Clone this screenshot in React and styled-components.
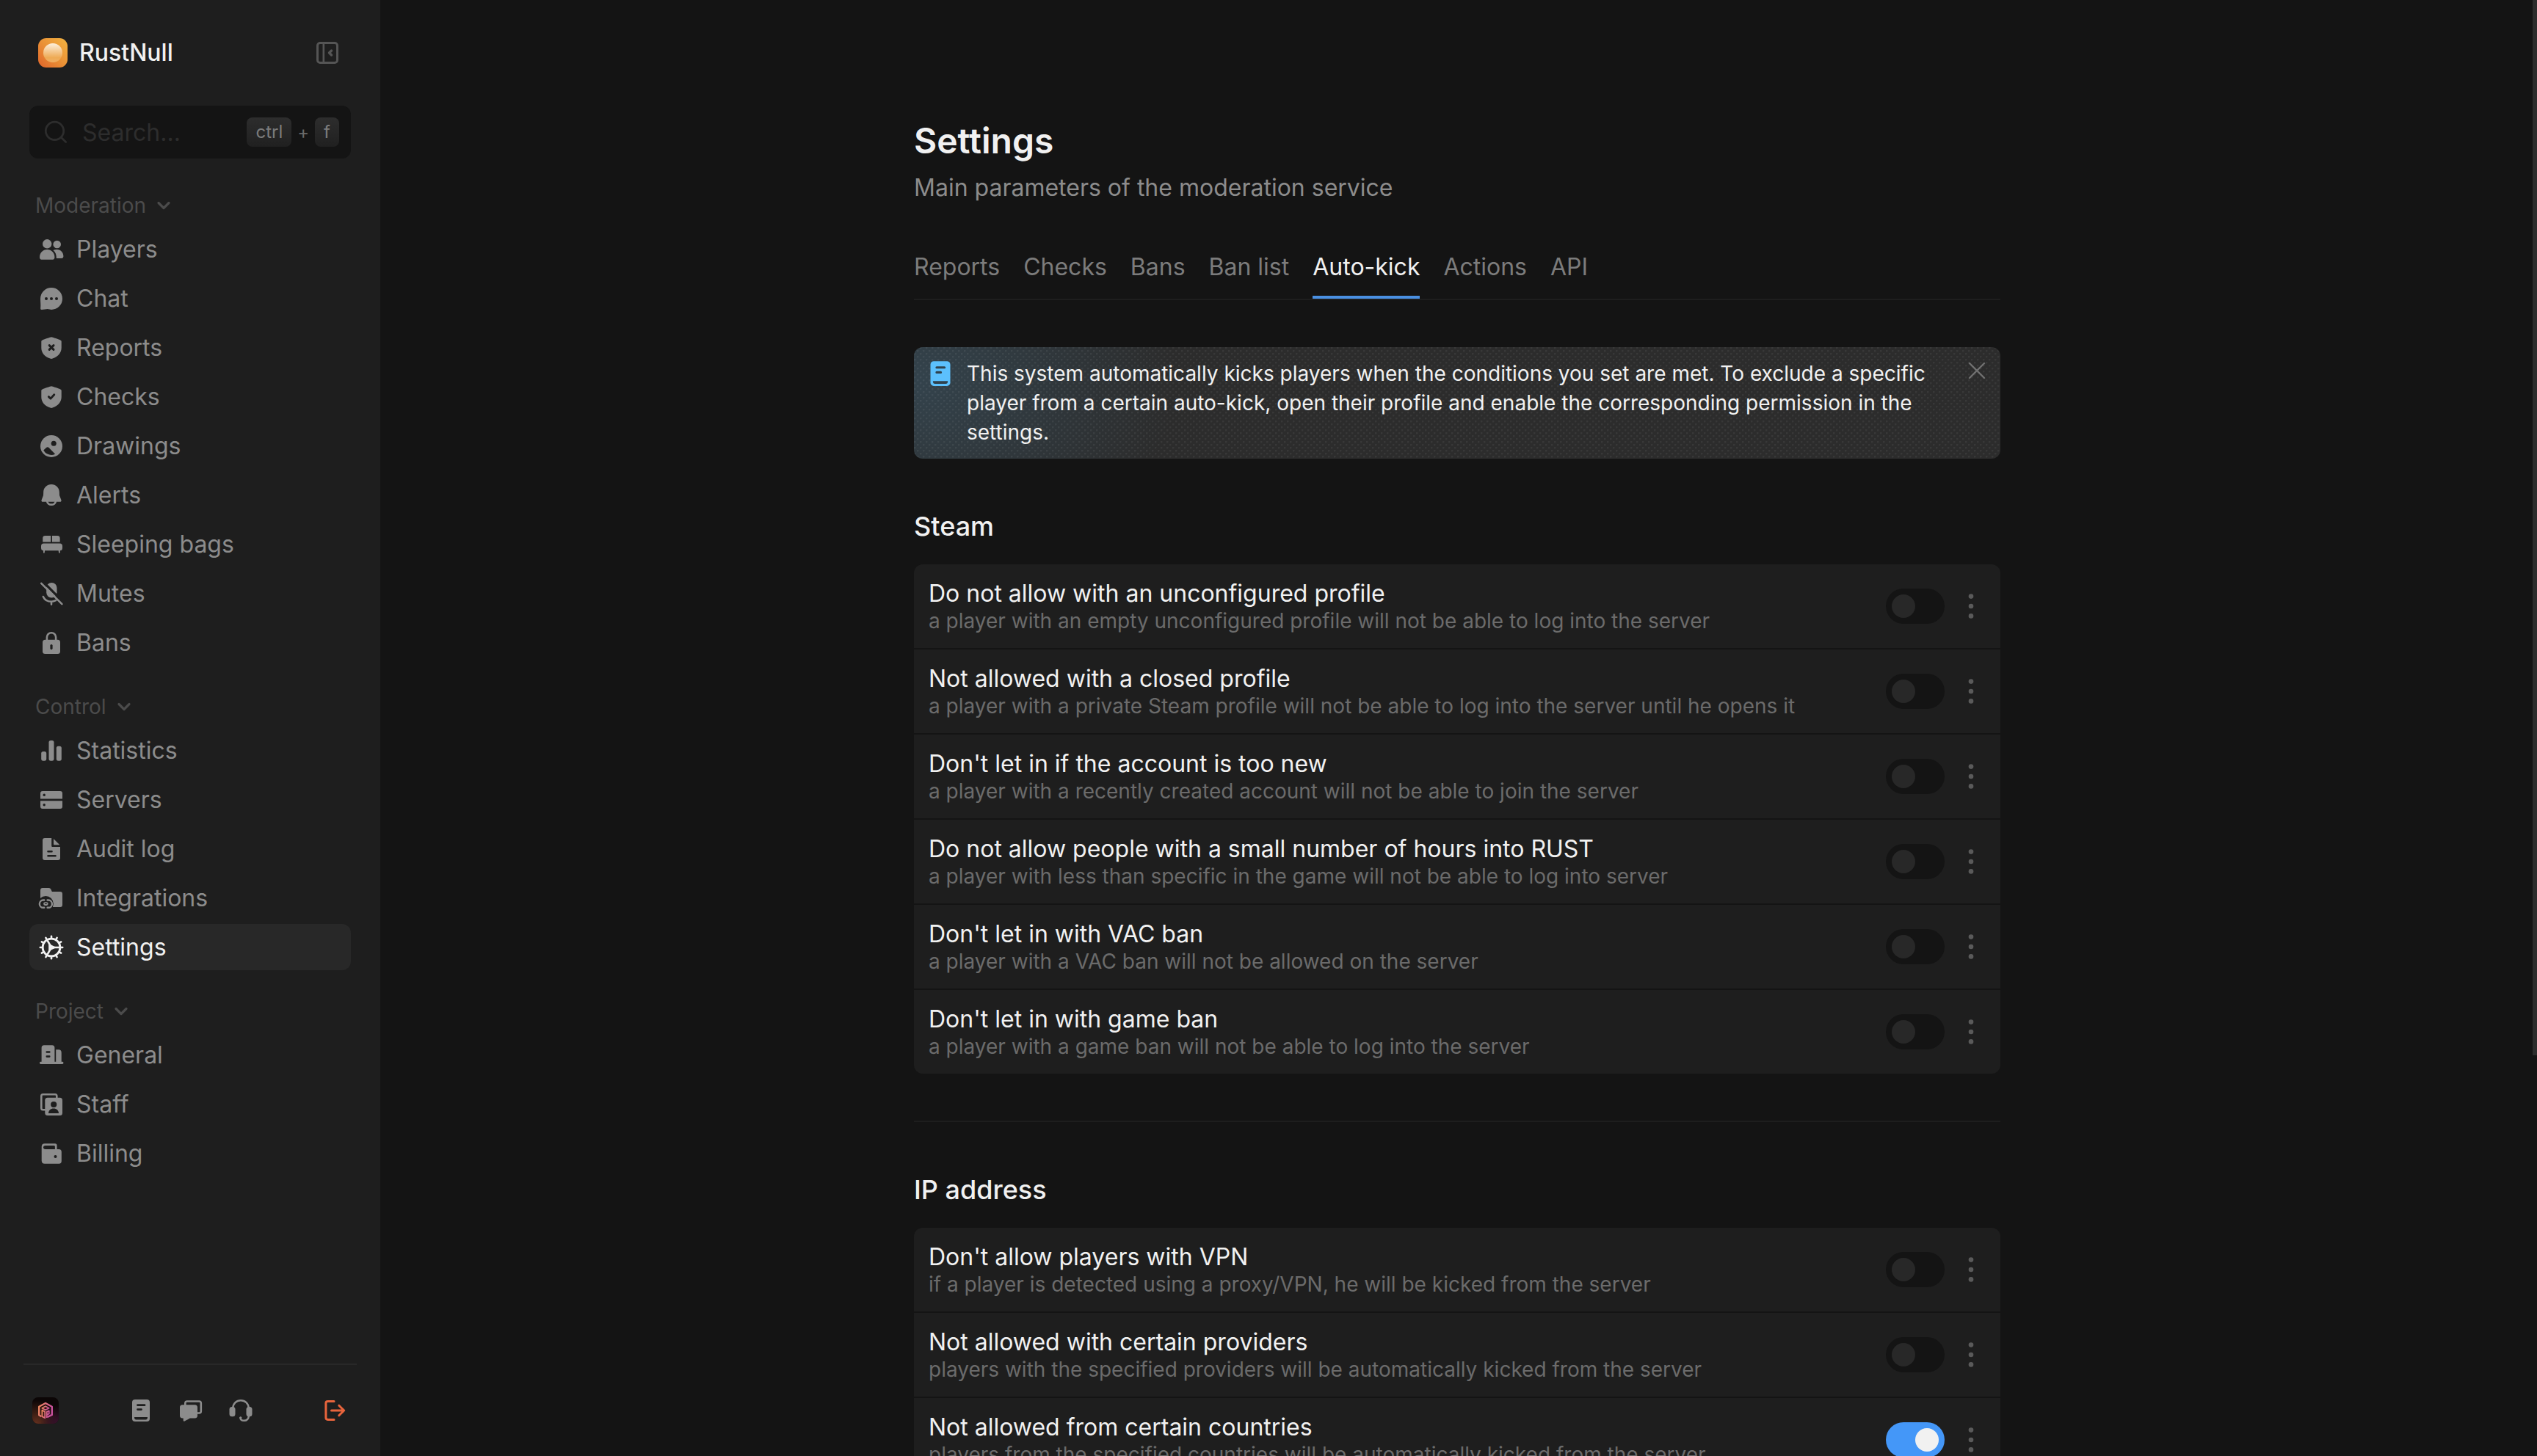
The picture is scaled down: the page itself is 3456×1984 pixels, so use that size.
import React, { useState } from 'react';
import styled, { createGlobalStyle } from 'styled-components';

const colors = {
  page: '#141414',
  panel: '#1e1e1e',
  line: '#282828',
  white: '#f1f1f1',
  text: '#8c8c8c',
  muted: '#6b6b6b',
  faint: '#4b4b4b',
  blue: '#4497f8',
  danger: '#e8643c'
};

const GlobalStyle = createGlobalStyle`
  * {
    box-sizing: border-box;
  }

  body {
    margin: 0;
    background: ${colors.page};
    color: ${colors.white};
    font-family: Inter, 'Liberation Sans', sans-serif;
    font-size: 32px;
  }

  button, input {
    font: inherit;
    color: inherit;
    background: none;
    border: 0;
    padding: 0;
    margin: 0;
  }

  button {
    cursor: pointer;
  }

  svg {
    display: block;
    flex-shrink: 0;
  }
`;

const Shell = styled.div`
  display: flex;
  height: 100vh;
  overflow: hidden;
`;

const Sidebar = styled.aside`
  display: flex;
  flex-direction: column;
  flex: 0 0 518px;
  min-width: 0;
  background: ${colors.panel};
`;

const Brand = styled.header`
  display: flex;
  align-items: center;
  gap: 16px;
  padding: 52px 56px 52px 52px;
`;

const BrandName = styled.span`
  flex: 1;
  line-height: 40px;
  font-weight: 500;
`;

const IconButton = styled.button`
  display: flex;
  align-items: center;
  justify-content: center;
  color: ${props => props.$color || colors.text};
`;

const SearchBox = styled.label`
  display: flex;
  align-items: center;
  height: 72px;
  margin: 0 40px;
  padding: 0 16px 0 20px;
  border-radius: 12px;
  background: ${colors.page};
  color: #2d2d2d;
`;

const SearchInput = styled.input`
  flex: 1;
  width: 100%;
  min-width: 0;
  margin: 0 20px;
  outline: none;

  &::placeholder {
    color: #2d2d2d;
    opacity: 1;
  }
`;

const Shortcut = styled.span`
  display: flex;
  align-items: center;
  gap: 8px;
  font-size: 24px;
  color: ${colors.muted};
`;

const Key = styled.kbd`
  padding: 0 12px;
  border-radius: 8px;
  background: linear-gradient(#2d2d2d, #202020);
  color: #7c7c7c;
  font-family: inherit;
  line-height: 40px;
`;

const Nav = styled.nav`
  display: flex;
  flex-direction: column;
  flex: 1;
  gap: 28px;
  padding: 36px 40px 0;
`;

const GroupTitle = styled.button`
  display: flex;
  align-items: center;
  gap: 14px;
  height: 56px;
  padding-left: 8px;
  font-size: 28px;
  color: ${colors.faint};
`;

const GroupItems = styled.div`
  display: flex;
  flex-direction: column;
  gap: 4px;
`;

const NavItem = styled.a`
  display: flex;
  align-items: center;
  gap: 18px;
  height: 63px;
  padding: 0 14px;
  border-radius: 12px;
  background: ${props => (props.$active ? '#282828' : 'transparent')};
  color: ${props => (props.$active ? colors.white : colors.text)};
  text-decoration: none;
`;

const Footer = styled.footer`
  display: flex;
  align-items: center;
  justify-content: space-between;
  height: 126px;
  margin: 0 32px;
  padding: 0 14px 0 12px;
  border-top: 2px solid ${colors.line};
`;

const FooterLinks = styled.div`
  display: flex;
  gap: 36px;
`;

const Main = styled.main`
  position: relative;
  flex: 1;
  min-width: 0;
  overflow: hidden;
`;

const Scroll = styled.div`
  height: 100%;
  padding: 160px 4px 64px 0;
  overflow-y: auto;
  scrollbar-width: none;
`;

const ScrollThumb = styled.div`
  position: absolute;
  top: 0;
  right: 0;
  width: 6px;
  height: 72.5%;
  background: #2d2d2d;
`;

const Content = styled.div`
  max-width: 1480px;
  margin: 0 auto;
`;

const Title = styled.h1`
  margin: 0;
  font-size: 48px;
  font-weight: 600;
  line-height: 64px;
`;

const Subtitle = styled.p`
  margin: 12px 0 68px;
  line-height: 40px;
  color: ${colors.text};
`;

const Tabs = styled.div`
  display: flex;
  gap: 32px;
  margin-bottom: 64px;
  border-bottom: 2px solid ${colors.panel};
`;

const Tab = styled.button`
  padding-bottom: 19px;
  border-bottom: 4px solid ${props => (props.$active ? '#4a90e2' : 'transparent')};
  color: ${props => (props.$active ? colors.white : '#7c7c7c')};
  line-height: 40px;
`;

const Notice = styled.div`
  display: flex;
  align-items: flex-start;
  gap: 18px;
  padding: 16px 20px 16px 18px;
  border-radius: 12px;
  background:
    radial-gradient(circle at 1px 1px, rgba(255, 255, 255, .06) 1px, transparent 2px) 0 0 / 8px 8px,
    radial-gradient(circle at 1px 1px, rgba(255, 255, 255, .06) 1px, transparent 2px) 4px 4px / 8px 8px,
    radial-gradient(ellipse 360px 260px at 0 30%, rgba(75, 140, 180, .24), transparent),
    #2c2c2c;
`;

const NoticeIcon = styled.span`
  padding-top: 2px;
  color: #5cc0fd;
`;

const NoticeClose = styled(IconButton)`
  padding-top: 4px;
`;

const NoticeText = styled.p`
  flex: 1;
  margin: 0;
  padding-right: 12px;
  font-size: 28px;
  line-height: 40px;
`;

const SectionTitle = styled.h2`
  margin: 64px 0 24px;
  font-size: 36px;
  font-weight: 500;
  line-height: 56px;
`;

const Divider = styled.hr`
  height: 2px;
  margin: 64px 0 0;
  border: 0;
  background: ${colors.panel};
`;

const Card = styled.div`
  display: flex;
  flex-direction: column;
  gap: 2px;
  border-radius: 12px;
  overflow: hidden;
`;

const Row = styled.div`
  display: flex;
  align-items: center;
  gap: 16px;
  padding: 20px;
  background: ${colors.panel};
`;

const RowLabel = styled.label`
  display: flex;
  flex-direction: column;
  flex: 1;
  line-height: 40px;
`;

const RowHint = styled.span`
  font-size: 28px;
  line-height: 34px;
  color: ${colors.muted};
`;

const Toggle = styled.input`
  appearance: none;
  width: 80px;
  height: 48px;
  padding: 8px;
  border-radius: 24px;
  background: ${colors.page};
  cursor: pointer;

  &::before {
    content: '';
    display: block;
    width: 32px;
    height: 32px;
    border-radius: 50%;
    background: #282828;
  }

  &:checked {
    background: ${colors.blue};
  }

  &:checked::before {
    margin-left: 32px;
    background: ${colors.white};
  }
`;

const MenuButton = styled(IconButton)`
  width: 40px;
  height: 48px;
`;

const Icon = ({ size = 32, children }) => (
  <svg width={size} height={size} viewBox="0 0 32 32" fill="currentColor" overflow="visible" aria-hidden="true">
    {children}
  </svg>
);

const line = { fill: 'none', stroke: 'currentColor', strokeLinecap: 'round', strokeLinejoin: 'round' };
// strokes and shapes punched out of a filled icon
const cut = { ...line, stroke: colors.panel };
const hole = { fill: colors.panel };

const shield = 'M16 1.2c1 0 11 3.6 12.3 4.2 1 .5 1.4 1 1.4 2V16c0 7-5 12-12 14.6-1.2.5-2.2.5-3.4 0C7 28 2.3 23 2.3 16V7.4c0-1 .4-1.5 1.4-2C5 4.8 15 1.2 16 1.2z';

const Logo = () => (
  <svg width="40" height="40" viewBox="0 0 40 40" aria-hidden="true">
    <defs>
      <linearGradient id="logoBg" x1="0" y1="1" x2="1" y2="0">
        <stop offset="0" stopColor="#e0642a" />
        <stop offset=".5" stopColor="#ea9236" />
        <stop offset="1" stopColor="#f2b341" />
      </linearGradient>
      <linearGradient id="logoBall" x1="0" y1="0" x2="0" y2="1">
        <stop offset="0" stopColor="#fdf0dc" />
        <stop offset=".75" stopColor="#eeaa55" />
        <stop offset="1" stopColor="#f0b064" />
      </linearGradient>
    </defs>
    <rect width="40" height="40" rx="11" fill="url(#logoBg)" />
    <circle cx="20" cy="20" r="13" fill="url(#logoBall)" />
  </svg>
);

const Avatar = () => (
  <svg width="36" height="36" viewBox="0 0 36 36" aria-hidden="true">
    <defs>
      <radialGradient id="avatarWarm" cx=".15" cy="1" r=".9">
        <stop offset="0" stopColor="#63301f" />
        <stop offset="1" stopColor="#63301f" stopOpacity="0" />
      </radialGradient>
      <radialGradient id="avatarCool" cx="1" cy="1" r=".7">
        <stop offset="0" stopColor="#3a1230" />
        <stop offset="1" stopColor="#3a1230" stopOpacity="0" />
      </radialGradient>
      <linearGradient id="avatarMark" x1="0" y1="0" x2="1" y2=".3">
        <stop offset="0" stopColor="#f08a5c" />
        <stop offset="1" stopColor="#c8509c" />
      </linearGradient>
    </defs>
    <rect width="36" height="36" rx="8" fill="#0c0606" />
    <rect width="36" height="36" rx="8" fill="url(#avatarWarm)" />
    <rect width="36" height="36" rx="8" fill="url(#avatarCool)" />
    <g fill="none" stroke="url(#avatarMark)" strokeWidth="2.4" strokeLinejoin="round">
      <path d="M12.5 26.2 9.2 24.3V12.7L18 8l8.8 4.7v11.2L20.5 27" />
      <path d="M13.3 14.8 18 12.3l4.7 2.5L18 17.2z" strokeWidth="1.8" />
      <path d="M13.4 17.5v8.6l3.8 2.2v-8.6zM19.8 24l3-1.6v-4l-3 1.5v8" strokeWidth="1.8" />
    </g>
  </svg>
);

const PanelIcon = () => (
  <Icon>
    <rect x="2.5" y="2.5" width="27" height="27" rx="3.5" {...line} strokeWidth="3" />
    <path d="M10.8 3v26" {...line} strokeWidth="2.6" />
    <path d="m21.5 13-3 3 3 3" {...line} strokeWidth="3.4" />
  </Icon>
);

const SearchIcon = () => (
  <Icon>
    <circle cx="14.5" cy="14.3" r="12.2" {...line} strokeWidth="2.8" />
    <path d="m23.5 23.4 6.2 6.2" {...line} strokeWidth="2.8" />
  </Icon>
);

const ChevronIcon = () => (
  <svg width="20" height="20" viewBox="0 0 20 20" aria-hidden="true">
    <path d="m3 6.5 7 7 7-7" {...line} strokeWidth="3.2" />
  </svg>
);

const PlayersIcon = () => (
  <Icon>
    <circle cx="10.2" cy="8.3" r="6.2" />
    <circle cx="23.7" cy="9" r="5.3" />
    <path d="M0 26.5C0 20.5 4.5 16 10.2 16s10.2 4.5 10.2 10.5c0 2-.8 3.2-2.6 3.2H2.6C.8 29.7 0 28.5 0 26.5z" />
    <path d="M18.5 17c1.5-.8 3.5-1 5.2-1 5 0 8.7 4.2 8.7 9 0 2-.9 3-2.6 3h-7c.2-4.5-1-8.5-4.3-11z" />
  </Icon>
);

const ChatIcon = () => (
  <Icon>
    <path d="M1 16A15 15 0 1 1 16 31c-2 0-3.5-.4-5-.9-2.5.4-5 .9-8.2.9-1.3 0-1.8-.8-1.6-2.2C1.7 25 1 20 1 16z" />
    <circle cx="9" cy="16" r="2" {...hole} />
    <circle cx="16" cy="16" r="2" {...hole} />
    <circle cx="23" cy="16" r="2" {...hole} />
  </Icon>
);

const ReportsIcon = () => (
  <Icon>
    <path d={shield} />
    <path d="m13.2 12.6 5.8 5.8m0-5.8-5.8 5.8" {...cut} strokeWidth="3" />
  </Icon>
);

const ChecksIcon = () => (
  <Icon>
    <path d={shield} />
    <path d="m12.3 15.6 2.7 2.5 4.8-5.3" {...cut} strokeWidth="2.8" />
  </Icon>
);

const DrawingsIcon = () => (
  <Icon>
    <circle cx="16" cy="16" r="15" />
    <circle cx="19.2" cy="12.2" r="3.5" {...hole} />
    <path d="M5.3 21.4 9 18.1c1.2-1 2.6-1 3.8.2l8.3 8.5c-3.5 1.7-7.3 1.6-10.6-.2-2.3-1.3-4-3-5.2-5.2z" {...hole} />
  </Icon>
);

const AlertsIcon = () => (
  <Icon>
    <path d="M16 1C10 1 5.5 5.5 5.2 11L5 16l-2.4 6.2c-.5 1.5.2 2.6 1.6 2.6h23.6c1.4 0 2.1-1.1 1.6-2.6L27 16l-.2-5C26.5 5.5 22 1 16 1z" />
    <path d="M10.3 24.8a5.9 5.1 0 0 0 11.4 0" {...line} strokeWidth="2.6" />
  </Icon>
);

const BedIcon = () => (
  <Icon>
    <path d="M7.5 4h7.7v8.4h-11V7.3C4.2 5.2 5.4 4 7.5 4zM17 4h7.3c2.1 0 3.3 1.2 3.3 3.3v5.1H17z" />
    <rect x="2" y="14.4" width="29" height="9.8" rx="3.5" />
    <path d="M5 23h2.2l-.5 4.5H5zM25.5 23h2.3v4.5h-1.7z" />
  </Icon>
);

const MutesIcon = () => (
  <Icon>
    <rect x="9.2" y="1" width="14.3" height="20.5" rx="7" />
    <path d="M4.8 20c2 4.6 6.2 6.8 11.2 6.8 2 0 4.2-.6 6-1.6M16 27v3.6" {...line} strokeWidth="2.6" />
    <path d="m4.4-.6 28.5 28.8" {...cut} strokeWidth="3.2" />
    <path d="M6 5.5v8" {...cut} strokeWidth="5" />
    <path d="m2.2 1.8 28.2 28.4" {...line} strokeWidth="2.6" />
  </Icon>
);

const BansIcon = () => (
  <Icon>
    <rect x="4" y="11.7" width="24" height="19.3" rx="3.5" />
    <path d="M9.9 13V8.3a6.1 6.1 0 0 1 12.2 0V13" {...line} strokeWidth="2.6" />
    <rect x="14.4" y="18" width="3.2" height="7.2" rx="1.6" {...hole} />
  </Icon>
);

const StatisticsIcon = () => (
  <Icon>
    <rect x="2.2" y="17" width="7" height="12.7" rx="2.6" />
    <rect x="12.5" y="2" width="7" height="27.7" rx="2.6" />
    <rect x="22.8" y="9.7" width="7" height="20" rx="2.6" />
  </Icon>
);

const ServersIcon = () => (
  <Icon>
    <path d="M4 4h24c2 0 3 1 3 3v7.500H1V7c0-2 1-3 3-3zM1 17.300h30V25c0 2-1 3-3 3H4c-2 0-3-1-3-3z" />
    <circle cx="6.2" cy="9.3" r="1.7" {...hole} />
    <circle cx="6.2" cy="22.7" r="1.7" {...hole} />
  </Icon>
);

const AuditIcon = () => (
  <Icon>
    <path d="M7 1h9.2v10.5c0 1 .6 1.6 1.6 1.6H28V28c0 2-1 3-3 3H7c-2 0-3-1-3-3V4c0-2 1-3 3-3z" />
    <path d="m19 2 8.3 8.3h-7c-.8 0-1.3-.5-1.3-1.3z" />
    <path d="M11.5 19.2h5M11.5 25.3h10" {...cut} strokeWidth="2.6" />
  </Icon>
);

const IntegrationsIcon = () => (
  <Icon>
    <path d="M4 2h8.5c1.6 0 2.3.8 3 2l1.3 3H28c2 0 3 1 3 3v15c0 2-1 3-3 3H1V5c0-2 1-3 3-3z" />
    <circle cx="8.3" cy="23.5" r="10.5" {...hole} />
    <path d="M6.2 18.5H5a5 5 0 0 0 0 10.3h1.2M10.6 18.5h1.2a5 5 0 0 1 0 10.3h-1.2" {...line} strokeWidth="2.4" />
    <rect x="6" y="22.2" width="4.8" height="2.8" rx="1.4" {...line} strokeWidth="1.8" />
  </Icon>
);

const teeth = [0, 30, 60, 90, 120, 150, 180, 210, 240, 270, 300, 330];

const GearIcon = () => (
  <Icon>
    <circle cx="16" cy="16" r="11.9" {...line} strokeWidth="2.8" />
    {teeth.map(angle => (
      <path key={angle} d="M28 16h3.2" transform={`rotate(${angle} 16 16)`} {...line} strokeWidth="2.6" />
    ))}
    {[0, 120, 240].map(angle => (
      <path key={angle} d="M16 16h11" transform={`rotate(${angle} 16 16)`} {...line} strokeWidth="2.6" />
    ))}
    <path d="M13.500 12.800v6.400L19.800 16z" stroke="currentColor" strokeWidth="2.6" strokeLinejoin="round" />
  </Icon>
);

const GeneralIcon = () => (
  <Icon>
    <path d="M6 2.3h11c2.3 0 3.4 1.2 3.4 3.4v19.5H2.6V5.7c0-2.2 1.2-3.4 3.4-3.4zM22.2 8.2h3.5c2.7 0 4 1.4 4 4v13h-7.5z" />
    <rect x="0" y="24.8" width="32.4" height="3.2" rx="1.4" />
    <path d="M9.8 11.5h3.5M9.8 17.6h3.5" {...cut} strokeWidth="2.6" />
  </Icon>
);

const StaffIcon = () => (
  <Icon>
    <path d="M8 23.3H4.5c-1.4 0-2.2-.8-2.2-2.2V4.5c0-1.4.8-2.2 2.2-2.2h16.6c1.4 0 2.2.8 2.2 2.2V8" {...line} strokeWidth="2.6" />
    <rect x="7.3" y="6.8" width="23.7" height="24.2" rx="3.5" />
    <circle cx="19.2" cy="16" r="4.1" {...hole} />
    <path d="M12 28c0-4 3-6.6 7-6.6s7 2.6 7 6.6z" {...hole} />
  </Icon>
);

const BillingIcon = () => (
  <Icon>
    <path d="M7 2.3h14c1.7 0 2.6.9 2.6 2.6V10h2.7c2.3 0 3.5 1.2 3.5 3.5v12.8c0 2.3-1.2 3.5-3.5 3.5H7c-2.8 0-4.3-1.5-4.3-4.3V6.6C2.7 3.8 4.2 2.3 7 2.3z" />
    <path d="M7.8 5h11.4c1.3 0 1.7.6 1.7 1.7V10H7.8C6 10 5 9 5 7.5S6 5 7.8 5z" {...hole} />
    <circle cx="21.5" cy="20" r="2" {...hole} />
  </Icon>
);

const BookIcon = ({ size, lines = colors.panel }) => (
  <Icon size={size}>
    <rect x="4" y="1" width="24" height="30" rx="4" />
    <path d="M11.5 8.7h9.5M11.5 14.6h5" {...line} stroke={lines} strokeWidth="2.8" />
    <path d="M7 25h18c0 2.5-.8 3.4-2.6 3.4H9.6C7.8 28.4 7 27.5 7 25z" fill={lines} />
  </Icon>
);

const ChatsIcon = () => (
  <Icon>
    <path d="M8.3 9V6c0-1.7.8-2.5 2.5-2.5h16.5c1.7 0 2.5.8 2.5 2.5v11c0 1.7-.8 2.5-2.5 2.5H25" {...line} strokeWidth="2.6" />
    <path d="M4.5 8.3h17c2.3 0 3.5 1.2 3.5 3.5v11.2c0 2.3-1.2 3.5-3.5 3.5h-6.7L7.5 30.6c-1 .5-1.8 0-1.8-1v-3.1H4.5C2.2 26.5 1 25.3 1 23V11.8c0-2.3 1.2-3.5 3.5-3.5z" />
  </Icon>
);

const HeadsetIcon = () => (
  <Icon>
    <path d="M5.2 12.5C5.6 6.5 10 2.2 16 2.2s10.4 4.3 10.8 10.3" {...line} strokeWidth="2.5" />
    <rect x=".5" y="11" width="8" height="13.3" rx="3.6" />
    <rect x="23.5" y="11" width="8" height="13.3" rx="3.6" />
    <path d="M27 23.5c-.6 4-3 6.3-6.5 6.3-3.3 0-5-1.4-5-3.8" {...line} strokeWidth="2.5" />
    <circle cx="15.8" cy="25.8" r="1.6" />
  </Icon>
);

const LogoutIcon = () => (
  <Icon>
    <path d="M15 3.6H6.5c-1.8 0-2.6.8-2.6 2.6v19.6c0 1.8.8 2.6 2.6 2.6H15" {...line} strokeWidth="3" />
    <path d="M11.5 16h17M21.8 9.2l6.9 6.8-6.9 6.8" {...line} strokeWidth="3" />
  </Icon>
);

const CloseIcon = () => (
  <svg width="24" height="24" viewBox="0 0 24 24" aria-hidden="true">
    <path d="m2 2 20 20M22 2 2 22" {...line} strokeWidth="2.4" />
  </svg>
);

const DotsIcon = () => (
  <Icon>
    <circle cx="16" cy="2.6" r="3.3" />
    <circle cx="16" cy="16" r="3.3" />
    <circle cx="16" cy="29.4" r="3.3" />
  </Icon>
);

const navGroups = [
  {
    title: 'Moderation',
    items: [
      ['Players', PlayersIcon],
      ['Chat', ChatIcon],
      ['Reports', ReportsIcon],
      ['Checks', ChecksIcon],
      ['Drawings', DrawingsIcon],
      ['Alerts', AlertsIcon],
      ['Sleeping bags', BedIcon],
      ['Mutes', MutesIcon],
      ['Bans', BansIcon]
    ]
  },
  {
    title: 'Control',
    items: [
      ['Statistics', StatisticsIcon],
      ['Servers', ServersIcon],
      ['Audit log', AuditIcon],
      ['Integrations', IntegrationsIcon],
      ['Settings', GearIcon]
    ]
  },
  {
    title: 'Project',
    items: [
      ['General', GeneralIcon],
      ['Staff', StaffIcon],
      ['Billing', BillingIcon]
    ]
  }
];

const tabs = ['Reports', 'Checks', 'Bans', 'Ban list', 'Auto-kick', 'Actions', 'API'];

const steamRules = [
  { id: 'unconfigured', title: 'Do not allow with an unconfigured profile', hint: 'a player with an empty unconfigured profile will not be able to log into the server' },
  { id: 'closed', title: 'Not allowed with a closed profile', hint: 'a player with a private Steam profile will not be able to log into the server until he opens it' },
  { id: 'new', title: "Don't let in if the account is too new", hint: 'a player with a recently created account will not be able to join the server' },
  { id: 'hours', title: 'Do not allow people with a small number of hours into RUST', hint: 'a player with less than specific in the game will not be able to log into server' },
  { id: 'vac', title: "Don't let in with VAC ban", hint: 'a player with a VAC ban will not be allowed on the server' },
  { id: 'game', title: "Don't let in with game ban", hint: 'a player with a game ban will not be able to log into the server' }
];

const ipRules = [
  { id: 'vpn', title: "Don't allow players with VPN", hint: 'if a player is detected using a proxy/VPN, he will be kicked from the server' },
  { id: 'providers', title: 'Not allowed with certain providers', hint: 'players with the specified providers will be automatically kicked from the server' },
  { id: 'countries', title: 'Not allowed from certain countries', hint: 'players from the specified countries will be automatically kicked from the server', on: true }
];

const RuleList = ({ rules }) => (
  <Card>
    {rules.map(rule => (
      <Row key={rule.id}>
        <RowLabel htmlFor={rule.id}>
          {rule.title}
          <RowHint>{rule.hint}</RowHint>
        </RowLabel>
        <Toggle type="checkbox" role="switch" id={rule.id} defaultChecked={rule.on} />
        <MenuButton $color="#5a5a5a" aria-label="More">
          <DotsIcon />
        </MenuButton>
      </Row>
    ))}
  </Card>
);

const SideMenu = () => (
  <Sidebar>
    <Brand>
      <Logo />
      <BrandName>RustNull</BrandName>
      <IconButton $color="#555555" aria-label="Collapse menu">
        <PanelIcon />
      </IconButton>
    </Brand>
    <SearchBox>
      <SearchIcon />
      <SearchInput type="text" placeholder="Search..." aria-label="Search" />
      <Shortcut>
        <Key>ctrl</Key>
        +
        <Key>f</Key>
      </Shortcut>
    </SearchBox>
    <Nav>
      {navGroups.map(group => (
        <div key={group.title}>
          <GroupTitle>
            {group.title}
            <ChevronIcon />
          </GroupTitle>
          <GroupItems>
            {group.items.map(([name, ItemIcon]) => (
              <NavItem key={name} href="#" $active={name === 'Settings'}>
                <ItemIcon />
                {name}
              </NavItem>
            ))}
          </GroupItems>
        </div>
      ))}
    </Nav>
    <Footer>
      <Avatar />
      <FooterLinks>
        <IconButton aria-label="Documentation"><BookIcon /></IconButton>
        <IconButton aria-label="Messages"><ChatsIcon /></IconButton>
        <IconButton aria-label="Support"><HeadsetIcon /></IconButton>
      </FooterLinks>
      <IconButton $color={colors.danger} aria-label="Log out"><LogoutIcon /></IconButton>
    </Footer>
  </Sidebar>
);

const App = () => {
  const [tab, setTab] = useState('Auto-kick');

  return (
    <Shell>
      <GlobalStyle />
      <SideMenu />
      <Main>
        <Scroll>
          <Content>
            <Title>Settings</Title>
            <Subtitle>Main parameters of the moderation service</Subtitle>
            <Tabs>
              {tabs.map(name => (
                <Tab key={name} $active={name === tab} onClick={() => setTab(name)}>{name}</Tab>
              ))}
            </Tabs>
            <Notice>
              <NoticeIcon>
                <BookIcon size={36} lines="#2f424e" />
              </NoticeIcon>
              <NoticeText>
                This system automatically kicks players when the conditions you set are met. To exclude a specific player
                from a certain auto-kick, open their profile and enable the corresponding permission in the settings.
              </NoticeText>
              <NoticeClose $color="#707070" aria-label="Close">
                <CloseIcon />
              </NoticeClose>
            </Notice>
            <SectionTitle>Steam</SectionTitle>
            <RuleList rules={steamRules} />
            <Divider />
            <SectionTitle>IP address</SectionTitle>
            <RuleList rules={ipRules} />
          </Content>
        </Scroll>
        <ScrollThumb />
      </Main>
    </Shell>
  );
};

export default App;
